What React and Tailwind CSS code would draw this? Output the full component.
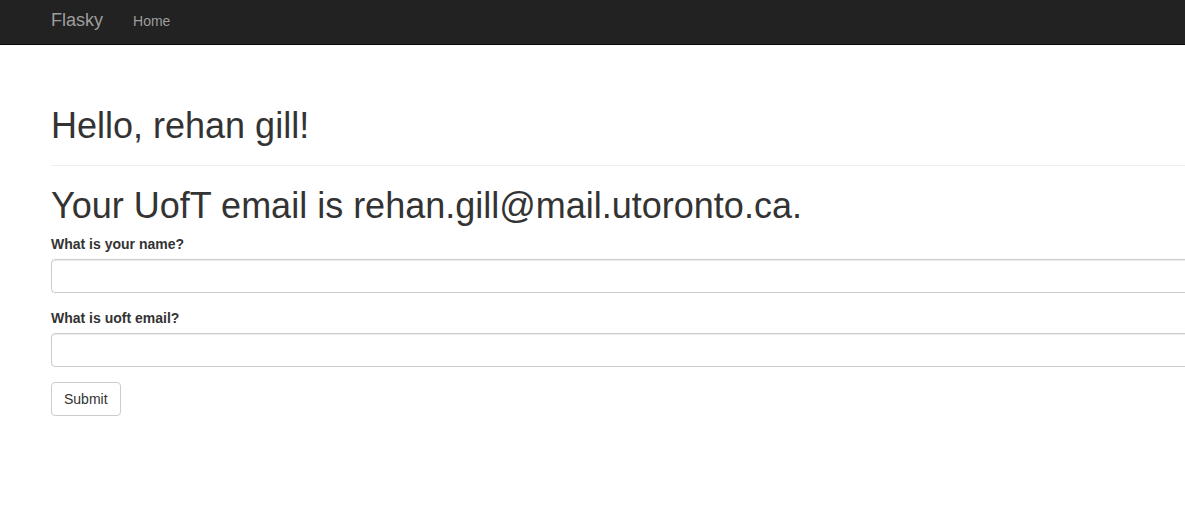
import React from 'react';

// ─── Top navbar ───
const Navbar = () => (
  <nav className="h-[45px] bg-[#222] border-b border-[#080808]">
    <div className="ml-[36px] w-[1170px] px-[15px] flex items-start">
      <a className="pt-[10px] text-[18px] leading-[20px] text-[#9d9d9d]">Flasky</a>
      <a className="ml-[30px] pt-[11px] text-[14px] leading-[20px] text-[#9d9d9d]">Home</a>
    </div>
  </nav>
);

const Field = ({ label }) => (
  <div className="mb-[15px]">
    <label className="block mb-[5px] text-[14px] leading-[20px] font-bold text-[#333]">{label}</label>
    <input
      type="text"
      className="block w-full h-[34px] px-[12px] bg-white border border-[#ccc] rounded-[4px] shadow-[inset_0_1px_1px_rgba(0,0,0,0.075)] text-[14px] outline-none"
    />
  </div>
);

export default function App() {
  return (
    <div className="min-h-screen bg-white overflow-x-hidden text-[#333] font-['Liberation_Sans',Arial,sans-serif]">
      <Navbar />

      <div className="ml-[36px] w-[1170px] px-[15px]">
        {/* Page header */}
        <div className="mt-[61px] pb-[19px] border-b border-[#eee]">
          <h1 className="text-[36px] leading-[39.6px] font-normal">Hello, rehan gill!</h1>
        </div>

        <h1 className="mt-[20px] mb-[9px] text-[36px] leading-[39.6px] font-normal">
          Your UofT email is rehan.gill@mail.utoronto.ca.
        </h1>

        <form>
          <Field label="What is your name?" />
          <Field label="What is uoft email?" />
          <button
            type="button"
            className="h-[34px] px-[12px] bg-white border border-[#ccc] rounded-[4px] text-[14px] leading-[20px] text-[#333]"
          >
            Submit
          </button>
        </form>
      </div>
    </div>
  );
}
